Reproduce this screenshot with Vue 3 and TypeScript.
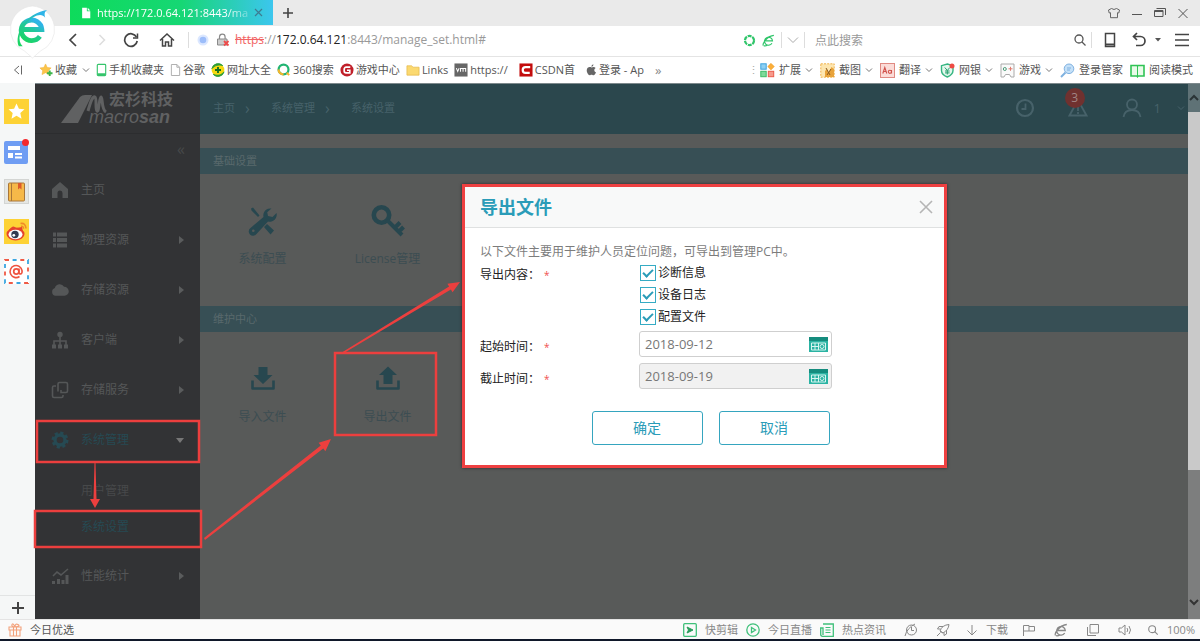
<script setup lang="ts">
import { ref } from 'vue'

interface Bookmark { icon: string; text: string; arrow?: boolean; wide?: boolean }
interface MenuItem { icon: string; text: string; arrow?: 'right' | 'down'; active?: boolean; children?: { text: string; active?: boolean }[] }

const bookmarks: Bookmark[] = [
  { icon: 'fav', text: '收藏', arrow: true },
  { icon: 'phone', text: '手机收藏夹' },
  { icon: 'page', text: '谷歌' },
  { icon: 'sites', text: '网址大全' },
  { icon: 'ring', text: '360搜索' },
  { icon: 'gamecenter', text: '游戏中心' },
  { icon: 'folder', text: 'Links' },
  { icon: 'vm', text: 'https://', wide: true },
  { icon: 'csdn', text: 'CSDN首', wide: true },
  { icon: 'apple', text: '登录 - Ap', wide: true },
]

const tools: Bookmark[] = [
  { icon: 'ext', text: '扩展', arrow: true },
  { icon: 'shot', text: '截图', arrow: true },
  { icon: 'trans', text: '翻译', arrow: true },
  { icon: 'bank', text: '网银', arrow: true },
  { icon: 'game', text: '游戏', arrow: true },
  { icon: 'keys', text: '登录管家' },
  { icon: 'reader', text: '阅读模式' },
]

const rail = [
  { icon: 'r-star', label: '收藏' },
  { icon: 'r-news', label: '新闻' },
  { icon: 'r-book', label: '小说' },
  { icon: 'r-weibo', label: '微博' },
  { icon: 'r-mail', label: '邮箱' },
]

const menu: MenuItem[] = [
  { icon: 'm-home', text: '主页' },
  { icon: 'm-list', text: '物理资源', arrow: 'right' },
  { icon: 'm-cloud', text: '存储资源', arrow: 'right' },
  { icon: 'm-tree', text: '客户端', arrow: 'right' },
  { icon: 'm-link', text: '存储服务', arrow: 'right' },
  {
    icon: 'm-gear', text: '系统管理', arrow: 'down', active: true,
    children: [{ text: '用户管理' }, { text: '系统设置', active: true }],
  },
  { icon: 'm-chart', text: '性能统计', arrow: 'right' },
]

const sections = [
  { title: '基础设置', tiles: [{ icon: 't-tools', text: '系统配置' }, { icon: 't-key', text: 'License管理' }] },
  { title: '维护中心', tiles: [{ icon: 't-import', text: '导入文件' }, { icon: 't-export', text: '导出文件' }] },
]

const statusLinks = [
  { icon: 's-clip', text: '快剪辑' },
  { icon: 's-live', text: '今日直播' },
  { icon: 's-news', text: '热点资讯' },
]

const options = ref([
  { id: 'diag', text: '诊断信息', checked: true },
  { id: 'log', text: '设备日志', checked: true },
  { id: 'conf', text: '配置文件', checked: true },
])
const startDate = ref('2018-09-12')
const endDate = ref('2018-09-19')
const keyword = ref('')
</script>

<template>
  <div class="browser">
    <svg class="defs" aria-hidden="true">
      <symbol id="chev" viewBox="0 0 8 8"><path d="M1 2.500 4 5.500 7 2.500" fill="none" stroke="currentColor" /></symbol>
      <symbol id="fav" viewBox="0 0 15 15"><path d="M7 1l1.800 3.800 4.200.5-3.100 2.900.8 4.200L7 10.400 3.200 12.400l.8-4.200L1 5.300l4.200-.5z" fill="#fbc54a" stroke="#f2b23a" stroke-width=".6" /><path d="M11.500 8v6M8.500 11h6" stroke="#3cb54a" stroke-width="2" /></symbol>
      <symbol id="phone" viewBox="0 0 11 15"><rect x="1" y="1.500" width="9" height="12" rx="1" fill="#fff" stroke="#35c46b" stroke-width="1.200" /><path d="M1 12h9" stroke="#35c46b" stroke-width="2" /></symbol>
      <symbol id="page" viewBox="0 0 12 15"><path d="M1.500 1.500h6l3 3v9h-9zM7.500 1.500v3h3" fill="#fff" stroke="#aaa" /></symbol>
      <symbol id="sites" viewBox="0 0 15 15"><circle cx="7.500" cy="7.500" r="6.800" fill="#f5d90f" /><path d="M2.500 12.300A6.800 6.800 0 0 0 14 9.500 C11 13 8 14 2.500 12.300M1 6A6.800 6.800 0 0 1 12.500 2.700C8 1.500 4 2.500 1 6" fill="#2b9c3a" stroke="#2b9c3a" /><path d="M7.500 4.300v6.400M4.300 7.500h6.400" stroke="#14701f" stroke-width="2" /></symbol>
      <symbol id="ring" viewBox="0 0 15 15"><circle cx="7" cy="7" r="5.300" fill="none" stroke="#22b573" stroke-width="2.400" /><path d="M1.700 7a5.300 5.300 0 0 0 5.300 5.300" fill="none" stroke="#f7b52c" stroke-width="2.400" /><path d="M10.500 10.500l2.500 2.500" stroke="#f7b52c" stroke-width="2.200" /></symbol>
      <symbol id="gamecenter" viewBox="0 0 15 15"><circle cx="7.500" cy="7.500" r="7" fill="#c0202a" /><path d="M11 4.500H6.500A2 2 0 0 0 4.500 6.500v2a2 2 0 0 0 2 2H10.500V7.800H7.500" fill="none" stroke="#fff" stroke-width="1.800" /></symbol>
      <symbol id="folder" viewBox="0 0 15 15"><path d="M1 3h5l1.500 1.500H14V13H1z" fill="#fbd970" stroke="#e6b94d" stroke-width=".8" /></symbol>
      <symbol id="vm" viewBox="0 0 15 15"><rect x=".5" y=".5" width="14" height="14" fill="#666" /><path d="M2.500 5.500l1.500 3.500 1.500-3.500M7 9.500V5.800h5.500v3.700M9.700 6v3.500" fill="none" stroke="#fff" stroke-width="1.100" /></symbol>
      <symbol id="csdn" viewBox="0 0 15 15"><rect x=".5" y=".5" width="14" height="14" fill="#c30d0d" /><path d="M12 4.300H7Q4 4.300 4 7.500T7 10.700h4.500" fill="none" stroke="#fff" stroke-width="2.400" /></symbol>
      <symbol id="apple" viewBox="0 0 12 15"><path d="M8 1.200C6.500 1.600 5.800 2.700 6 4 7.300 3.800 8.200 2.600 8 1.200M6 4.700C4.500 4 1 3.600.8 7.800c0 2.600 1.700 5.400 3.200 5.400.8 0 1-.5 2-.5s1.300.5 2.100.5c1.200 0 2.400-1.800 2.800-3.200C8.500 9 8.600 6.300 10.500 5.300 9.300 3.700 7.300 4.200 6 4.700" fill="#666" /></symbol>
      <symbol id="ext" viewBox="0 0 15 15"><rect x=".8" y=".8" width="5.400" height="5.400" fill="#8fd0f3" stroke="#3fa3dd" /><path d="M11 .3l3.300 3.300L11 6.900 7.700 3.600z" fill="#fbae3a" stroke="#ea9a1e" stroke-width=".5" /><rect x=".8" y="8.300" width="5.400" height="5.400" fill="#7ed99a" stroke="#3dbb66" /><rect x="8.300" y="8.300" width="5.400" height="5.400" fill="#f69a8c" stroke="#ea5c4b" /></symbol>
      <symbol id="shot" viewBox="0 0 15 15"><rect x=".8" y=".8" width="13.400" height="13.400" fill="#fde6b0" stroke="#f0b24c" stroke-dasharray="2 1.200" /><path d="M5 14V8l2-2 1.500 4 3-6 2.500 2v8z" fill="#e8a33a" /><path d="M6 5l4 7M11 6l-4 6" stroke="#8a5a22" /></symbol>
      <symbol id="trans" viewBox="0 0 15 15"><rect x=".5" y=".5" width="14" height="14" fill="#fbdcd8" stroke="#e08a82" /><path d="M2.800 10.500l2-6 2 6M3.500 8.500h2.600M11.500 7v3.500M11.500 8.800a1.600 1.600 0 1 0-3.200 0 1.600 1.600 0 0 0 3.200 0" fill="none" stroke="#d0514a" stroke-width="1.100" /></symbol>
      <symbol id="bank" viewBox="0 0 15 15"><path d="M7.300 1L13 2.700v4.800c0 3.200-2.600 5.200-5.700 6.500C4 12.700 1.500 10.700 1.500 7.500V2.700z" fill="#e4f8ee" stroke="#35b581" stroke-width="1.400" /><path d="M4.800 4.500l2.500 3 2.500-3M7.300 7.500v4M5 8h4.600M5 9.900h4.600" fill="none" stroke="#28a06e" /><circle cx="12" cy="3" r="2.500" fill="#ef4b44" /></symbol>
      <symbol id="game" viewBox="0 0 15 15"><path d="M1 1h13v13h-3l-1.500-2.500h-4L4 14H1z" fill="#fafafa" stroke="#aaa" /><circle cx="4.800" cy="6" r="1.500" fill="none" stroke="#4b9b78" /><path d="M10.500 3.800v4M8.500 5.800h4" stroke="#e07c70" /></symbol>
      <symbol id="keys" viewBox="0 0 15 15"><circle cx="9" cy="5.800" r="4.800" fill="#c4e0f8" stroke="#7fb1e0" /><path d="M5.500 9.500L1 14" stroke="#7fb1e0" stroke-width="2" /><path d="M7 5h4M7 7h3" stroke="#7fb1e0" /></symbol>
      <symbol id="reader" viewBox="0 0 15 15"><path d="M1 2.500h6l.5.5.5-.5h6v10.500H8l-.5.7L7 13H1z" fill="#e9fbe9" stroke="#30c455" stroke-width="1.600" /><path d="M7.500 3v10" stroke="#30c455" /></symbol>

      <symbol id="r-star" viewBox="0 0 25 25"><rect width="25" height="25" fill="#fdd235" /><path d="M12.500 4.500l2.400 5.200 5.600.6-4.200 3.800 1.200 5.600-5-2.900-5 2.900 1.200-5.600-4.200-3.800 5.600-.6z" fill="#fff" /></symbol>
      <symbol id="r-news" viewBox="0 0 25 25"><rect y="2" width="24" height="23" rx="2" fill="#6f9df3" /><path d="M4 7h12v4H4zM4 14h5v5H4zM11 14h7v2h-7zM11 17.500h7v2h-7z" fill="#fff" /><circle cx="21.500" cy="3.500" r="3.500" fill="#f4282d" /></symbol>
      <symbol id="r-book" viewBox="0 0 25 25"><rect x=".5" y=".5" width="24" height="24" fill="#e5e7e4" stroke="#d3d5d3" /><rect x="4.500" y="4" width="16" height="18" rx="1" fill="#f6b949" stroke="#a9773a" /><path d="M7.500 4v18" stroke="#a9773a" /><path d="M14 4h3.500v6.500l-1.700-1.500L14 10.500z" fill="#dc5b2a" /></symbol>
      <symbol id="r-weibo" viewBox="0 0 25 25"><rect width="25" height="25" fill="#fdd235" /><ellipse cx="11.500" cy="15" rx="9" ry="6.500" fill="#e5432c" /><path d="M5 11Q9 5 12 9l6-1 1 5z" fill="#e5432c" /><ellipse cx="11.500" cy="15.500" rx="7" ry="4.700" fill="#fff" /><circle cx="11" cy="15.500" r="3.700" fill="#333c52" /><circle cx="9.800" cy="16.300" r="1.400" fill="#fff" /><path d="M16.500 4.500q5-1 5.500 5M17 7.300q2.500-.3 2.500 2.500" fill="none" stroke="#f08a28" stroke-width="1.600" /></symbol>
      <symbol id="r-mail" viewBox="0 0 25 25"><rect width="25" height="25" fill="#fff" /><rect x="1" y="1" width="23" height="23" fill="none" stroke="#ef5a45" stroke-width="1.800" stroke-dasharray="4 11.300" /><rect x="1" y="1" width="23" height="23" fill="none" stroke="#3aa6e0" stroke-width="1.800" stroke-dasharray="4 11.300" stroke-dashoffset="7.700" /><circle cx="12.300" cy="12.500" r="2.600" fill="none" stroke="#ef5340" stroke-width="1.700" /><path d="M15 9.500v4.200q.4 1.500 1.800 1.200 1.700-.7 1.200-3.400A6 6 0 1 0 15.500 17.500" fill="none" stroke="#ef5340" stroke-width="1.600" /></symbol>

      <symbol id="m-home" viewBox="0 0 18 18"><path d="M9 1L1 8v9h5.500v-5a2.500 2.500 0 0 1 5 0v5H17V8z" fill="currentColor" /></symbol>
      <symbol id="m-list" viewBox="0 0 18 18"><path d="M2 3.500h3M6 3.500h10M2 9h3M6 9h10M2 14.500h3M6 14.500h10" stroke="currentColor" stroke-width="4" /></symbol>
      <symbol id="m-cloud" viewBox="0 0 20 18"><path d="M5 15.500a4.500 4.500 0 0 1-.7-8.700A5.500 5.500 0 0 1 14.500 5.500a5 5 0 0 1 .5 10z" fill="currentColor" /></symbol>
      <symbol id="m-tree" viewBox="0 0 18 18"><circle cx="9" cy="3.500" r="2.700" fill="currentColor" /><path d="M9 5v11M3 15v-5h12v5" fill="none" stroke="currentColor" stroke-width="1.600" /><path d="M1 13.500h4v4H1zM7 13.500h4v4H7zM13 13.500h4v4h-4z" fill="currentColor" /></symbol>
      <symbol id="m-link" viewBox="0 0 18 18"><path d="M7 5.500V3q0-1.500 1.500-1.500h6.500q1.500 0 1.500 1.500v7q0 1.500-1.500 1.500h-5V9M5 5H3Q1.500 5 1.500 6.500V15Q1.500 16.500 3 16.500h7.500Q12 16.500 12 15v-1M7 5.500v5" fill="none" stroke="currentColor" stroke-width="1.600" /></symbol>
      <symbol id="m-gear" viewBox="0 0 18 18"><circle cx="9" cy="9" r="5" fill="none" stroke="currentColor" stroke-width="3.400" /><circle cx="9" cy="9" r="7.200" fill="none" stroke="currentColor" stroke-width="2.600" stroke-dasharray="3.200 2.450" /></symbol>
      <symbol id="m-chart" viewBox="0 0 18 18"><path d="M2 9l4-4 4 3 7-6" fill="none" stroke="currentColor" stroke-width="1.600" /><path d="M1 14h3v3H1zM6 12h3v5H6zM10.500 13h3v4h-3zM14.500 8h3v9h-3z" fill="currentColor" /></symbol>

      <symbol id="t-tools" viewBox="0 0 34 34"><path d="M5 4.500l2-1 6.500 8-1.500 1.500L5.500 6.500zM21 20l7 6.500-3.500 4-6.500-7.500z" fill="currentColor" /><path d="M25.500 4.500a7 7 0 0 0-8 8.500L4.500 24a4.300 4.300 0 1 0 6 6L22 17.500a7 7 0 0 0 8.500-8.500l-4 4-4.500-1-.8-3.700z" fill="currentColor" /><circle cx="7.300" cy="26.800" r="1.300" fill="#585a59" /></symbol>
      <symbol id="t-key" viewBox="0 0 34 34"><circle cx="10.500" cy="11" r="7.700" fill="none" stroke="currentColor" stroke-width="4.600" /><path d="M16 16l15 15M24 23.500l5-5M28 27.500l4.500-4.500" stroke="currentColor" stroke-width="4" /></symbol>
      <symbol id="t-import" viewBox="0 0 34 34"><path d="M12.500 5h9v8h5L17 22 7.500 13h5z" fill="currentColor" /><path d="M6.500 18.500v8h21v-8" fill="none" stroke="currentColor" stroke-width="2.600" stroke-linejoin="round" /></symbol>
      <symbol id="t-export" viewBox="0 0 34 34"><path d="M12.500 22v-9h-4.500L17 4.500 26 13h-4.500v9z" fill="currentColor" /><path d="M6.500 18.500v8h21v-8" fill="none" stroke="currentColor" stroke-width="2.600" stroke-linejoin="round" /></symbol>

      <symbol id="s-clip" viewBox="0 0 14 14"><rect x=".7" y=".7" width="12.600" height="12.600" rx="1" fill="none" stroke="#3fc07a" stroke-width="1.300" /><path d="M4 4l6 3-6 3 1.500-3z" fill="#2a9d5c" stroke="#2a9d5c" /></symbol>
      <symbol id="s-live" viewBox="0 0 14 14"><circle cx="7" cy="7" r="6.200" fill="none" stroke="#3fc07a" stroke-width="1.300" /><path d="M5.500 4.500L9.500 7l-4 2.500z" fill="none" stroke="#3fc07a" stroke-width="1.300" /></symbol>
      <symbol id="s-news" viewBox="0 0 14 14"><path d="M3 1h10.300v12.300H2.500Q.7 13.300.7 11.500V5H3v7" fill="none" stroke="#3fc07a" stroke-width="1.300" /><path d="M5.500 4.500h5M5.500 7h5M5.500 9.500h5" stroke="#3fc07a" stroke-width="1.200" /></symbol>
      <symbol id="cal" viewBox="0 0 19 15"><rect width="19" height="15" fill="#2bb3a3" /><rect width="19" height="4" fill="#158c7e" /><path d="M2.500 6h14v7h-14zM2.500 9.500h7M6 6v7M9.500 6v7" fill="none" stroke="#d8f5f0" /><circle cx="13" cy="9.500" r="2" fill="none" stroke="#d8f5f0" /></symbol>
      <symbol id="e-line" viewBox="0 0 14 14"><path d="M3.500 7.500h7.800A4.300 4.300 0 1 0 10.700 10M1.500 12.500C0 10 6 2 12.800 1.500M2 12.700q2 .5 4-.8" fill="none" stroke="currentColor" stroke-width="1.300" /></symbol>
      <symbol id="find" viewBox="0 0 14 14"><circle cx="6" cy="6" r="4" fill="none" stroke="currentColor" stroke-width="1.300" /><path d="M9 9l3.500 3.500" stroke="currentColor" stroke-width="1.300" /></symbol>
    </svg>

    <header class="tabs">
      <div class="tab">
        <svg class="i12" viewBox="0 0 12 14"><path d="M1.500 1h5.500v4h4v8h-9.500zM8 1l3 3H8z" fill="#fff" /></svg>
        <span class="tab-title">https://172.0.64.121:8443/ma</span>
        <button class="plain tab-x" aria-label="关闭标签页"><svg class="i9" viewBox="0 0 9 9"><path d="M1 1l7 7M8 1L1 8" stroke="#3d7b91" stroke-width="1.200" /></svg></button>
      </div>
      <button class="plain" aria-label="新标签页"><svg class="i10" viewBox="0 0 10 10"><path d="M5 0v10M0 5h10" stroke="#444" stroke-width="1.600" /></svg></button>
      <div class="win">
        <button class="plain" aria-label="皮肤"><svg class="i12" viewBox="0 0 12 12"><path d="M3.500 1.500Q6 3.500 8.500 1.500l3 1.500-.7 3-1.300-.3v5h-7v-5L1.200 6 .5 3z" fill="none" stroke="#666" /></svg></button>
        <button class="plain" aria-label="最小化"><svg class="i12" viewBox="0 0 12 12"><path d="M1 7.500h10" stroke="#555" /></svg></button>
        <button class="plain" aria-label="还原"><svg class="i12" viewBox="0 0 12 12"><path d="M.5 3.500h8.500v6H.5zM.5 4.500H9M2.500 1.500h9v6.500" fill="none" stroke="#555" /></svg></button>
        <button class="plain" aria-label="关闭"><svg class="i12" viewBox="0 0 12 12"><path d="M1.500 2l9 9M10.500 2l-9 9" stroke="#555" /></svg></button>
      </div>
    </header>

    <nav class="address">
      <button class="plain" aria-label="后退"><svg class="i16" viewBox="0 0 16 16"><path d="M11 2L5 8l6 6" fill="none" stroke="#444" stroke-width="1.700" /></svg></button>
      <button class="plain" aria-label="前进"><svg class="i16" viewBox="0 0 16 16"><path d="M5.500 3l5 5-5 5" fill="none" stroke="#ddd" stroke-width="1.500" /></svg></button>
      <button class="plain" aria-label="刷新"><svg class="i16" viewBox="0 0 16 16"><path d="M13.500 5A6.300 6.300 0 1 0 14.200 9" fill="none" stroke="#444" stroke-width="1.700" /><path d="M14.500 1.500V6H10" fill="none" stroke="#444" stroke-width="1.500" /></svg></button>
      <button class="plain home" aria-label="主页"><svg class="i16" viewBox="0 0 16 16"><path d="M1 8.500l7-6.500 7 6.500M3.500 7v7h3v-4h3v4h3V7" fill="none" stroke="#444" stroke-width="1.500" /></svg></button>
      <i class="sep"></i>
      <svg class="i12 dot" viewBox="0 0 12 12"><circle cx="6" cy="6" r="5.500" fill="#dbe7ff" /><circle cx="6" cy="6" r="3.300" fill="#9cbdfa" /></svg>
      <svg class="i14" viewBox="0 0 14 14"><path d="M3.500 6V4a2.800 2.800 0 0 1 5.600 0v2" fill="none" stroke="#8a8a8a" stroke-width="1.200" /><path d="M1.500 6h9.500v6h-9.500z" fill="#ccc" stroke="#8a8a8a" /><path d="M8 8l4.500 4.500M12.500 8L8 12.500" stroke="#ee4b4b" stroke-width="1.800" /></svg>
      <div class="url"><s>https</s>://<b>172.0.64.121</b>:8443/manage_set.html#</div>
      <svg class="i13 green" viewBox="0 0 14 14"><circle cx="7" cy="7" r="4.900" fill="none" stroke="currentColor" stroke-width="2.400" stroke-dasharray="4.200 .93" /></svg>
      <svg class="i13 green"><use href="#e-line" /></svg>
      <i class="sep"></i>
      <button class="plain" aria-label="展开"><svg class="i12" viewBox="0 0 12 12"><path d="M1 3.500l5 5 5-5" fill="none" stroke="#aaa" /></svg></button>
      <i class="sep"></i>
      <input v-model="keyword" class="search" type="text" aria-label="搜索" placeholder="点此搜索">
      <button class="plain" aria-label="搜索按钮"><svg class="i14 dark"><use href="#find" /></svg></button>
      <i class="sep"></i>
      <div class="acts">
        <button class="plain" aria-label="手机"><svg class="i16" viewBox="0 0 16 16"><path d="M3.500 1.500h9v13h-9z" fill="none" stroke="#444" stroke-width="1.500" /><path d="M3.500 12.500h9" stroke="#444" stroke-width="2" /></svg></button>
        <button class="plain undo" aria-label="撤销"><svg class="i16" viewBox="0 0 16 16"><path d="M6 1L2.500 4.500 6 8M3 4.500h6.500a4.500 4.500 0 0 1 0 9H5" fill="none" stroke="#444" stroke-width="1.700" /></svg><svg class="i6" viewBox="0 0 6 6"><path d="M0 1h6L3 4.500z" fill="#555" /></svg></button>
        <button class="plain" aria-label="菜单"><svg class="i16" viewBox="0 0 16 16"><path d="M1 2.500h14M1 8h14M1 13.500h14" stroke="#444" stroke-width="1.600" /></svg></button>
      </div>
    </nav>

    <nav class="marks">
      <button class="plain fold" aria-label="收起"><svg class="i12" viewBox="0 0 12 12"><path d="M7 2L2.500 6 7 10M9.500 1.500v9" fill="none" stroke="#666" /></svg></button>
      <a v-for="b in bookmarks" :key="b.text" href="#" :class="{ wide: b.wide }">
        <svg class="i14" :class="{ slim: ['phone', 'page', 'apple'].includes(b.icon) }"><use :href="'#' + b.icon" /></svg>{{ b.text }}<svg v-if="b.arrow" class="i8"><use href="#chev" /></svg>
      </a>
      <span class="more">»</span>
      <div class="tools">
        <span class="grip">⋮</span>
        <a v-for="b in tools" :key="b.text" href="#">
          <svg class="i15"><use :href="'#' + b.icon" /></svg>{{ b.text }}<svg v-if="b.arrow" class="i8"><use href="#chev" /></svg>
        </a>
      </div>
    </nav>

    <svg class="logo" viewBox="0 0 50 56"><path d="M25 1a24 24 0 0 1 8 46l-8 7-8-7A24 24 0 0 1 25 1" fill="#fff" stroke="#e4e4e4" stroke-width=".6" />
      <defs><linearGradient id="eg" x1="0" y1="1" x2=".6" y2="0"><stop offset="0" stop-color="#19d65c" /><stop offset=".6" stop-color="#20c997" /><stop offset="1" stop-color="#2fb4e8" /></linearGradient></defs>
      <path d="M13.500 25h21A10.500 10.500 0 1 0 32.500 32" fill="none" stroke="url(#eg)" stroke-width="5" /><path d="M11 42C6 30 18 8 40 5 37 7 37 9 38 13 34 7 26 11 19 18 12 26 9 36 15 42z" fill="url(#eg)" />
    </svg>

    <main class="main">
      <aside class="rail">
        <button v-for="r in rail" :key="r.icon" class="plain" :aria-label="r.label"><svg class="i25"><use :href="'#' + r.icon" /></svg></button>
        <button class="plain add" aria-label="添加"><svg class="i12" viewBox="0 0 12 12"><path d="M6 0v12M0 6h12" stroke="#444" stroke-width="2" /></svg></button>
      </aside>

      <div class="app">
        <aside class="side">
          <div class="brand">
            <svg class="mark" viewBox="0 0 46 30"><path d="M0 29L19 3Q21 1 24 1h7L17 29z" fill="currentColor" /><path d="M27 17C30 6 32 2 34 3s0 12 2 14 2-14 4-14 0 12 5 15" fill="none" stroke="currentColor" stroke-width="3" /></svg>
            <div class="names"><span>宏杉科技</span><em>macro<b>san</b></em></div>
          </div>
          <div class="fold-row">«</div>
          <template v-for="m in menu" :key="m.text">
            <a href="#" class="item" :class="{ on: m.active }">
              <svg class="i18"><use :href="'#' + m.icon" /></svg><span>{{ m.text }}</span><i v-if="m.arrow" :class="m.arrow"></i>
            </a>
            <div v-if="m.children" class="subs">
              <a v-for="c in m.children" :key="c.text" href="#" :class="{ on: c.active }">{{ c.text }}</a>
            </div>
          </template>
        </aside>

        <div class="content">
          <div class="top">
            <div class="crumbs"><a href="#">主页</a><i>›</i><a href="#">系统管理</a><i>›</i><a href="#">系统设置</a></div>
            <div class="user">
              <svg class="i20" viewBox="0 0 20 20"><circle cx="10" cy="10" r="8" fill="none" stroke="currentColor" stroke-width="2.200" /><path d="M10.500 5.500v5.500H6.500" fill="none" stroke="currentColor" stroke-width="1.800" /></svg>
              <span class="alarm"><svg class="i20" viewBox="0 0 20 20"><path d="M10 2L1.500 17.500h17z" fill="none" stroke="currentColor" stroke-width="1.800" /><path d="M10 8v5M10 14v2" stroke="currentColor" stroke-width="1.800" /></svg><b>3</b></span>
              <svg class="i20" viewBox="0 0 20 20"><circle cx="10" cy="6.500" r="5" fill="none" stroke="currentColor" stroke-width="1.800" /><path d="M1.500 19q1-7 8.500-7t8.500 7" fill="none" stroke="currentColor" stroke-width="1.800" /></svg>
              <span class="uname">1</span><svg class="i8"><use href="#chev" /></svg>
            </div>
          </div>
          <section v-for="s in sections" :key="s.title">
            <h2>{{ s.title }}</h2>
            <div class="tiles">
              <a v-for="t in s.tiles" :key="t.text" href="#"><svg class="i34"><use :href="'#' + t.icon" /></svg>{{ t.text }}</a>
            </div>
          </section>
        </div>

        <div class="scroll">
          <svg class="i12" viewBox="0 0 12 12"><path d="M2 8l4-4 4 4" fill="none" stroke="#2a3436" stroke-width="2" /></svg>
          <div class="thumb"></div>
          <svg class="i12" viewBox="0 0 12 12"><path d="M2 4l4 4 4-4" fill="none" stroke="#333" stroke-width="2" /></svg>
        </div>

        <div class="overlay">
          <form class="modal" role="dialog" aria-labelledby="dlg-title" @submit.prevent>
            <div class="head">
              <h1 id="dlg-title">导出文件</h1>
              <button type="button" class="plain" aria-label="关闭对话框"><svg class="i14" viewBox="0 0 14 14"><path d="M1 1l12 12M13 1L1 13" stroke="#b5b5b5" stroke-width="1.600" /></svg></button>
            </div>
            <div class="body">
              <p>以下文件主要用于维护人员定位问题，可导出到管理PC中。</p>
              <div class="row" role="group" aria-labelledby="opt-label">
                <span id="opt-label" class="label first">导出内容：<em>*</em></span>
                <div class="opts">
                  <label v-for="o in options" :key="o.id" :for="o.id"><input :id="o.id" v-model="o.checked" type="checkbox">{{ o.text }}</label>
                </div>
              </div>
              <div class="row">
                <label class="label" for="start">起始时间：<em>*</em></label>
                <div class="date"><input id="start" v-model="startDate" type="text"><svg><use href="#cal" /></svg></div>
              </div>
              <div class="row">
                <label class="label" for="end">截止时间：<em>*</em></label>
                <div class="date off"><input id="end" v-model="endDate" type="text" readonly><svg><use href="#cal" /></svg></div>
              </div>
              <div class="btns"><button type="submit">确定</button><button type="button">取消</button></div>
            </div>
          </form>
        </div>
      </div>
    </main>

    <footer class="status">
      <svg class="i14 gift" viewBox="0 0 14 14"><path d="M1 4h12v3H1zM2 7v6h10V7M5.500 4v9M8.500 4v9M7 4Q3 3.500 4 1.500T7 4q0-4 3-2.500T7 4" fill="none" stroke="currentColor" stroke-width="1.100" /></svg>
      <a href="#">今日优选</a>
      <div class="right">
        <a v-for="s in statusLinks" :key="s.text" href="#"><svg class="i14"><use :href="'#' + s.icon" /></svg>{{ s.text }}</a>
        <svg class="i14" viewBox="0 0 14 14"><circle cx="7.500" cy="7" r="5" fill="none" stroke="currentColor" /><path d="M1 13Q3 5 11 1M7.500 4v3.500h2.500" fill="none" stroke="currentColor" /></svg>
        <svg class="i14" viewBox="0 0 14 14"><path d="M4 8Q6 2 13 1.500 12.500 7 7 10zM4 8l3 2M1 13l3.500-3.500M4.500 6H1.500L3 3.500h4M8 9.500v3L10.500 11V7" fill="none" stroke="currentColor" /></svg>
        <a href="#" class="dl"><svg class="i12" viewBox="0 0 12 12"><path d="M6 1v10M1.500 6.500L6 11l4.500-4.500" fill="none" stroke="currentColor" /></svg>下载</a>
        <svg class="i14" viewBox="0 0 14 14"><path d="M1.500 13V2.500H7V8H1.500M7 3.500h5.500V8H7" fill="none" stroke="currentColor" /></svg>
        <svg class="i14"><use href="#e-line" /></svg>
        <svg class="i14" viewBox="0 0 14 14"><path d="M4 1.500h8.500V10H4zM1.500 4v8.500H10" fill="none" stroke="currentColor" /></svg>
        <svg class="i14" viewBox="0 0 14 14"><path d="M1 5h2.500L7 2v10L3.500 9H1zM9 5q1.500 2 0 4M11 3q3 4 0 8" fill="none" stroke="currentColor" /></svg>
        <span class="zoom"><svg class="i12"><use href="#find" /></svg>100%</span>
      </div>
    </footer>

    <svg class="notes" width="1200" height="641" viewBox="0 0 1200 641" aria-hidden="true">
      <g fill="none" stroke="#ec3f3e" stroke-width="2.500">
        <rect x="37" y="421" width="162" height="41" />
        <rect x="35" y="511" width="166" height="36" />
        <rect x="335" y="353" width="101" height="82" />
      </g>
      <g fill="#ec3f3e">
        <path d="M94.500 463h1l1 36h3.500l-5 9-5-9h3.500z" />
        <path d="M204 538L320.800 445.400 318.600 442.700 331 439 325.400 451.300 323.200 448.600 205 540z" />
        <path d="M341 353L449.100 286.500 447.400 283.700 460 282 452.600 292.300 450.900 289.500 344 353z" />
      </g>
    </svg>
  </div>
</template>

<style>
body { margin: 0; }
</style>

<style scoped>
* { box-sizing: border-box; }
.browser { position: relative; display: flex; flex-direction: column; min-height: 100vh; overflow: hidden; background: #fff; color: #555; font: 11px/16px "Open Sans", "Noto Sans CJK SC", sans-serif; }
.defs { position: absolute; width: 0; height: 0; }
a { color: inherit; text-decoration: none; }
svg { flex: none; display: block; }
.plain { border: 0; padding: 0; background: none; display: flex; align-items: center; color: inherit; }
.i6 { width: 6px; height: 6px; } .i8 { width: 8px; height: 8px; } .i9 { width: 9px; height: 9px; } .i10 { width: 10px; height: 10px; }
.i12 { width: 12px; height: 12px; } .i13 { width: 13px; height: 13px; } .i14 { width: 14px; height: 14px; } .i15 { width: 15px; height: 15px; }
.i16 { width: 16px; height: 16px; } .i18 { width: 18px; height: 18px; } .i20 { width: 20px; height: 20px; } .i25 { width: 25px; height: 25px; } .i34 { width: 34px; height: 34px; }
.green { color: #30c56a; } .dark { color: #555; }

.tabs { display: flex; align-items: center; gap: 10px; height: 26px; padding: 0 11px 0 70px; background: #eaeaea; }
.tab { display: flex; align-items: center; gap: 5px; width: 203px; height: 25px; padding: 0 10px; align-self: flex-start; background: linear-gradient(90deg, #0edb5b, #16d774 55%, #3cc6ee); color: #fff; font-size: 11px; }
.tab-title { white-space: nowrap; mask-image: linear-gradient(90deg, #000 85%, rgba(0, 0, 0, .3)); }
.tab-x { margin-left: auto; }
.win { display: flex; gap: 11px; margin-left: auto; }

.address { display: flex; align-items: center; height: 31px; padding: 0 10px 2px 65px; border-bottom: 1px solid #e4e4e4; }
.address > .plain + .plain { margin-left: 13px; }
.address > .plain + .home { margin-left: 20px; }
.sep { flex: none; width: 1px; height: 16px; background: #ddd; }
.home + .sep { margin: 0 8px 0 13px; }
.dot { margin-right: 7px; }
.url { flex: 1; margin-left: 5px; overflow: hidden; white-space: nowrap; color: #999; font-size: 12px; line-height: 20px; }
.url s { color: #f26464; } .url b { color: #222; font-weight: 400; }
.green + .green { margin: 0 6px; }
.sep + .plain { margin: 0 5px; }
.search { width: 258px; height: 20px; margin-left: 10px; border: 0; padding: 0; outline: 0; background: none; color: #555; font: inherit; font-size: 12px; }
.search::placeholder { color: #999; opacity: 1; }
.search + .plain { margin-right: 4px; }
.acts { display: flex; align-items: center; gap: 13px; margin-left: 10px; }
.undo { gap: 8px; }

.marks { display: flex; align-items: center; gap: 6px; height: 26px; padding: 0 7px 0 12px; }
.marks a { display: flex; align-items: center; gap: 2px; white-space: nowrap; }
.marks a .i8 { margin-left: 3px; color: #777; }
.marks a.wide { margin-right: 5px; }
.fold { margin-right: 9px; }
.slim { width: 11px; }
.more { font-size: 13px; color: #888; }
.tools { display: flex; align-items: center; gap: 7px; margin-left: auto; }
.tools a { gap: 4px; }
.tools a .i8 { margin-left: 0; }
.grip { color: #aaa; width: 5px; }
.logo { position: absolute; left: 8px; top: 5px; width: 49px; height: 55px; }

.main { flex: 1; display: flex; }
.rail { display: flex; flex-direction: column; align-items: center; gap: 15px; width: 35px; padding: 16px 2px 0 0; background: #f5f7f7; }
.rail .add { width: 35px; height: 24px; margin: auto -2px 0 0; border-top: 1px solid #e2e4e4; justify-content: center; }
.app { position: relative; flex: 1; display: flex; border-top: 1px solid #7d898c; background: #585a59; color: #555758; font-size: 12px; }

.side { display: flex; flex-direction: column; width: 165px; background: #323335; }
.brand { display: flex; align-items: center; height: 50px; padding-left: 26px; border-bottom: 1px solid #2c2d2f; color: #606162; }
.mark { width: 46px; height: 30px; }
.names { display: flex; flex-direction: column; width: 86px; margin-left: -18px; }
.names span { padding-left: 20px; font: 700 16px/16px "Liberation Sans", "Noto Sans CJK SC", sans-serif; white-space: nowrap; }
.names em { font: italic 18px/18px "Liberation Sans", sans-serif; }
.fold-row { height: 31px; padding-right: 15px; text-align: right; line-height: 30px; font-size: 16px; color: #47494a; }
.item { display: flex; align-items: center; gap: 12px; height: 50px; padding: 0 16px; }
.item i { margin-left: auto; border: 4px solid transparent; }
.item i.right { border-left: 5px solid #5a5c5d; border-right: 0; }
.item i.down { border-top: 5px solid #777; border-bottom: 0; }
.item.on, .subs .on { color: #264a53; }
.subs { padding: 8px 0 6px; color: #47494a; }
.subs a { display: block; height: 36px; padding-left: 46px; line-height: 36px; }

.content { flex: 1; }
.top { display: flex; align-items: center; justify-content: space-between; height: 50px; margin-bottom: 14px; padding: 0 3px 2px 13px; background: #2b474d; color: #47626a; font-size: 11px; }
.crumbs { display: flex; align-items: center; }
.crumbs i { width: 36px; padding-left: 10px; font-style: normal; font-size: 16px; }
.user { display: flex; align-items: center; }
.alarm { position: relative; margin: 0 34px 0 33px; }
.alarm b { position: absolute; left: -3px; top: -10px; width: 20px; height: 20px; border-radius: 10px; background: #70312f; color: #a08585; text-align: center; font: 12px/20px "Open Sans", sans-serif; }
.uname { margin: 0 16px 0 12px; font-size: 13px; }
h2 { margin: 0; height: 26px; padding-left: 13px; background: #374f55; color: #59696c; font-size: 11px; line-height: 26px; font-weight: 400; }
.tiles { display: flex; height: 132px; }
.tiles a { display: flex; flex-direction: column; align-items: center; gap: 13px; width: 125px; padding-top: 30px; color: #3c4d52; line-height: 16px; }
.tiles svg { color: #27474f; }

.scroll { display: flex; flex-direction: column; align-items: center; width: 12px; background: #7d7e7e; }
.scroll svg:first-child { width: 12px; height: 28px; background: #5f7276; }
.thumb { width: 12px; height: 358px; background: #c9c9c9; }
.scroll svg:last-child { margin: auto 0 11px; }

.overlay { position: absolute; inset: 0; padding: 100px 0 0 427px; }
.modal { width: 485px; border: 3px solid #ee4041; background: #fff; color: #222; box-shadow: 0 0 3px #2c2c2c; }
.head { display: flex; align-items: center; justify-content: space-between; height: 41px; padding: 0 11px 0 15px; border-bottom: 1px solid #dfe1e1; background: #f8f9f9; }
h1 { margin: 0; color: #2a9cb8; font-size: 18px; line-height: 24px; }
.body { padding: 14px 15px 20px; }
.body p { margin: 0; color: #7c7c7c; line-height: 20px; }
.row { display: flex; align-items: flex-start; }
.label { width: 159px; line-height: 31px; }
.label em { margin-left: 4px; color: #f0504f; font-size: 10px; font-style: normal; }
.first { line-height: 26px; }
.opts { padding: 0 0 3px 1px; }
.opts label { display: flex; align-items: center; gap: 2px; height: 22px; }
.opts input { display: grid; place-items: center; appearance: none; width: 16px; height: 16px; margin: 0; border: 1px solid #35abc4; background: #fff; }
.opts input:checked::after { content: ""; width: 8px; height: 4px; margin-bottom: 3px; border: solid #2a9cb8; border-width: 0 0 2px 2px; transform: rotate(-45deg); }
.date { display: flex; align-items: center; width: 193px; height: 26px; padding: 0 3px 0 5px; border: 1px solid #cfcfcf; border-radius: 3px; }
.date.off { background: #f1f1f1; }
.date input { flex: 1; min-width: 0; border: 0; padding: 0; outline: 0; background: none; color: #777; font: inherit; font-size: 13px; }
.date svg { width: 19px; height: 15px; }
.btns { display: flex; justify-content: center; gap: 16px; margin-top: 16px; padding-left: 12px; }
.btns button { width: 111px; height: 34px; border: 1px solid #35a5bf; border-radius: 3px; background: #fff; color: #2a9cb8; font: inherit; font-size: 14px; }

.status { display: flex; align-items: center; height: 22px; padding: 0 5px 0 8px; border-top: 1px solid #e4e4e4; border-bottom: 2px solid #10182a; background: #fafafa; }
.gift { margin-right: 8px; color: #f3a27c; }
.right { display: flex; align-items: center; gap: 18px; margin-left: auto; color: #888; }
.right a, .zoom { display: flex; align-items: center; gap: 8px; }
.right a + a { margin-left: -10px; }
.right .dl { margin: 0 -4px 0 -2px; }
.zoom { margin-left: -3px; }
.notes { position: absolute; left: 0; top: 0; pointer-events: none; }
</style>
